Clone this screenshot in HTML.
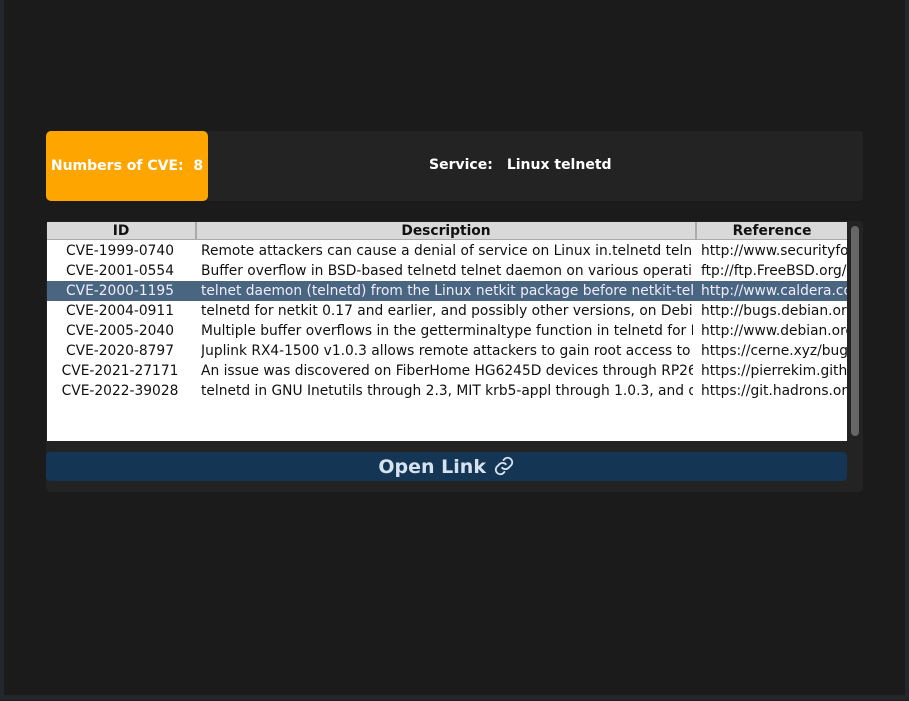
<!DOCTYPE html><html><head><style>
body{margin:0;width:909px;height:701px;background:#1b1b1b;overflow:hidden;font-family:"DejaVu Sans","Liberation Sans",sans-serif;position:relative}
.frame{position:absolute;left:0;top:0;width:901px;height:695px;border-left:4px solid #23262b;border-bottom:5px solid #23262b;border-right:4px solid #23262b}
.hdr{position:absolute;left:46px;top:131px;width:817px;height:70px;background:#232323;border-radius:4px}
.org{position:absolute;left:46px;top:131px;width:162px;height:70px;background:#ffa500;border-radius:5px;color:#fff;font-weight:bold;font-size:14px;line-height:70px;text-align:center}
.svc{position:absolute;left:429px;top:131px;line-height:68px;color:#fff;font-weight:bold;font-size:14px;white-space:nowrap}
.panel{position:absolute;left:46px;top:221px;width:817px;height:271px;background:#232323;border-radius:4px}
.tbl{position:absolute;left:47px;top:222px;width:800px;height:219px;background:#fff;overflow:hidden}
.row{position:absolute;left:0;height:20px;width:800px;font-size:13.8px;line-height:20px;color:#111;white-space:nowrap}
.row div{position:absolute;top:0;overflow:hidden;height:20px}
.c1{left:0;width:146px;text-align:center}.c2{left:154px;width:492px}.c3{left:654px;width:146px}
.h{top:0;height:18px;background:#d9d9d9;font-weight:bold;line-height:18px}
.h div{height:17px;border-right:2px solid #aaa;border-bottom:1px solid #aaa}
.h .c1{width:148px}.h .c2{left:150px;width:498px;text-align:center}.h .c3{left:650px;width:150px;text-align:center;border-right:none}
.sel{background:#4a6580;color:#eef}
.sb{position:absolute;left:851px;top:226px;width:8px;height:210px;background:#666;border-radius:4px}
.btn{position:absolute;left:46px;top:452px;width:801px;height:29px;background:#153555;border-radius:4px;color:#d6e2f0;font-weight:bold;font-size:19px;line-height:30px;text-align:center}
</style></head><body>
<div class="frame"></div>
<div class="hdr"></div>
<div class="org">Numbers of CVE:&nbsp; 8</div>
<div class="svc">Service:<span style="display:inline-block;width:14px"></span>Linux telnetd</div>
<div class="panel"></div>
<div class="tbl">
<div class="row h"><div class="c1">ID</div><div class="c2">Description</div><div class="c3">Reference</div></div>
<div class="row" style="top:19px"><div class="c1">CVE-1999-0740</div><div class="c2">Remote attackers can cause a denial of service on Linux in.telnetd telnet daemon</div><div class="c3">http://www.securityfocus.com</div></div>
<div class="row" style="top:39px"><div class="c1">CVE-2001-0554</div><div class="c2">Buffer overflow in BSD-based telnetd telnet daemon on various operating systems</div><div class="c3">ftp://ftp.FreeBSD.org/</div></div>
<div class="row sel" style="top:59px"><div class="c1">CVE-2000-1195</div><div class="c2">telnet daemon (telnetd) from the Linux netkit package before netkit-telnet-0.16</div><div class="c3">http://www.caldera.com</div></div>
<div class="row" style="top:79px"><div class="c1">CVE-2004-0911</div><div class="c2">telnetd for netkit 0.17 and earlier, and possibly other versions, on Debian GNU</div><div class="c3">http://bugs.debian.org</div></div>
<div class="row" style="top:99px"><div class="c1">CVE-2005-2040</div><div class="c2">Multiple buffer overflows in the getterminaltype function in telnetd for Heimdal</div><div class="c3">http://www.debian.org</div></div>
<div class="row" style="top:119px"><div class="c1">CVE-2020-8797</div><div class="c2">Juplink RX4-1500 v1.0.3 allows remote attackers to gain root access to the device</div><div class="c3">https://cerne.xyz/bugs</div></div>
<div class="row" style="top:139px"><div class="c1">CVE-2021-27171</div><div class="c2">An issue was discovered on FiberHome HG6245D devices through RP2613 devices</div><div class="c3">https://pierrekim.github.io</div></div>
<div class="row" style="top:159px"><div class="c1">CVE-2022-39028</div><div class="c2">telnetd in GNU Inetutils through 2.3, MIT krb5-appl through 1.0.3, and derivatives</div><div class="c3">https://git.hadrons.org</div></div>
</div>
<div class="sb"></div>
<div class="btn">Open Link <svg width="22" height="22" viewBox="0 0 24 24" style="vertical-align:-4px" fill="none" stroke="#d6e2f0" stroke-width="2" stroke-linecap="round"><path d="M10 14a5 5 0 0 0 7 0l3-3a5 5 0 0 0-7-7l-1.5 1.5"/><path d="M14 10a5 5 0 0 0-7 0l-3 3a5 5 0 0 0 7 7l1.5-1.5"/></svg></div>
</body></html>
